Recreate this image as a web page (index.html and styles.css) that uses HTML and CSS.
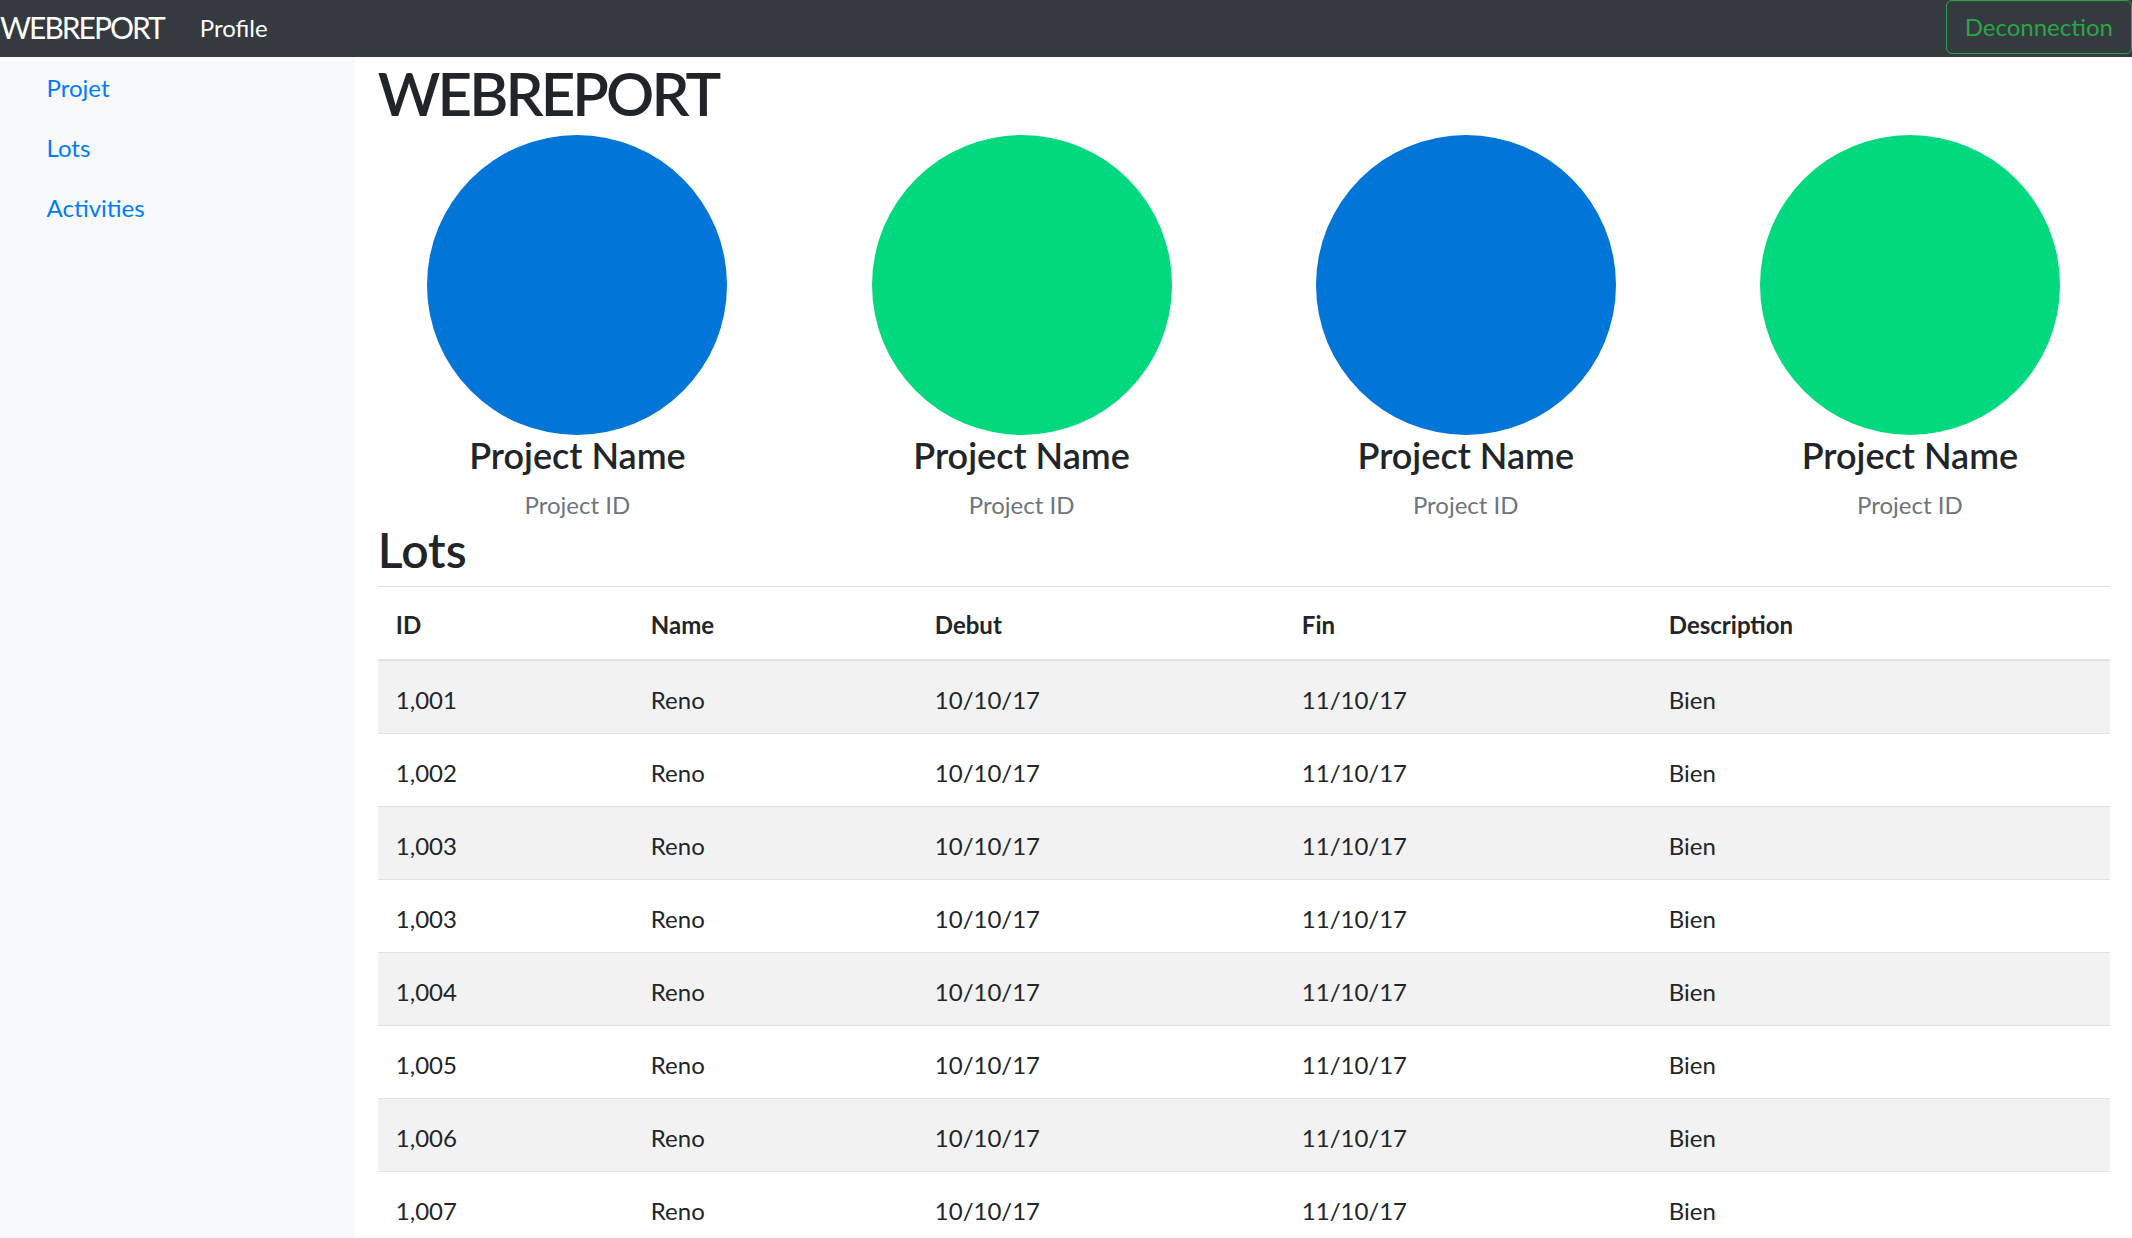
FILE: index.html
```html
<!DOCTYPE html>
<html lang="fr">
<head>
<meta charset="utf-8">
<title>WEBREPORT</title>
<link rel="stylesheet" href="styles.css">
</head>
<body>
<nav class="topbar">
  <a class="brand" href="#">WEBREPORT</a>
  <a class="top-link" href="#">Profile</a>
  <button class="btn-logout" type="button">Deconnection</button>
</nav>
<div class="layout">
  <aside class="sidebar">
    <ul class="side-nav">
      <li><a href="#">Projet</a></li>
      <li><a href="#">Lots</a></li>
      <li><a href="#">Activities</a></li>
    </ul>
  </aside>
  <main class="content">
    <h1 class="page-title">WEBREPORT</h1>
    <section class="projects">
      <div class="project">
        <div class="avatar avatar-blue"></div>
        <h4 class="project-name">Project Name</h4>
        <p class="project-id">Project ID</p>
      </div>
      <div class="project">
        <div class="avatar avatar-green"></div>
        <h4 class="project-name">Project Name</h4>
        <p class="project-id">Project ID</p>
      </div>
      <div class="project">
        <div class="avatar avatar-blue"></div>
        <h4 class="project-name">Project Name</h4>
        <p class="project-id">Project ID</p>
      </div>
      <div class="project">
        <div class="avatar avatar-green"></div>
        <h4 class="project-name">Project Name</h4>
        <p class="project-id">Project ID</p>
      </div>
    </section>
    <h2 class="section-title">Lots</h2>
    <table class="lots">
      <colgroup>
        <col class="c-id"><col class="c-name"><col class="c-debut"><col class="c-fin"><col class="c-desc">
      </colgroup>
      <thead>
        <tr><th>ID</th><th>Name</th><th>Debut</th><th>Fin</th><th>Description</th></tr>
      </thead>
      <tbody>
        <tr><td>1,001</td><td>Reno</td><td>10/10/17</td><td>11/10/17</td><td>Bien</td></tr>
        <tr><td>1,002</td><td>Reno</td><td>10/10/17</td><td>11/10/17</td><td>Bien</td></tr>
        <tr><td>1,003</td><td>Reno</td><td>10/10/17</td><td>11/10/17</td><td>Bien</td></tr>
        <tr><td>1,003</td><td>Reno</td><td>10/10/17</td><td>11/10/17</td><td>Bien</td></tr>
        <tr><td>1,004</td><td>Reno</td><td>10/10/17</td><td>11/10/17</td><td>Bien</td></tr>
        <tr><td>1,005</td><td>Reno</td><td>10/10/17</td><td>11/10/17</td><td>Bien</td></tr>
        <tr><td>1,006</td><td>Reno</td><td>10/10/17</td><td>11/10/17</td><td>Bien</td></tr>
        <tr><td>1,007</td><td>Reno</td><td>10/10/17</td><td>11/10/17</td><td>Bien</td></tr>
      </tbody>
    </table>
  </main>
</div>
</body>
</html>
```
FILE: styles.css
```css
html, body {
  margin: 0;
  height: 100%;
  overflow: hidden;
}
body {
  font-family: Lato, "Noto Sans", sans-serif;
  font-size: 24px;
  line-height: 36px;
  color: #212529;
  background: #fff;
}
.topbar {
  height: 57px;
  background: #343a40;
  display: flex;
  align-items: flex-start;
}
.brand {
  font-size: 30px;
  line-height: 55px;
  letter-spacing: -2px;
  color: #fff;
  text-decoration: none;
  margin-right: 24px;
}
.top-link {
  font-size: 24px;
  line-height: 55px;
  color: #fff;
  text-decoration: none;
  padding: 0 12px;
}
.btn-logout {
  margin-left: auto;
  font-family: inherit;
  font-size: 24px;
  line-height: 36px;
  height: 54px;
  padding: 8px 18px;
  border: 1px solid #28a745;
  border-radius: 6px;
  color: #28a745;
  background: transparent;
}
.layout {
  display: flex;
  height: calc(100% - 57px);
}
.sidebar {
  flex: none;
  width: 16.6667%;
  background: #f8f9fa;
  padding-top: 1px;
}
.side-nav {
  list-style: none;
  margin: 0;
  padding: 0 0 0 22.5px;
}
.side-nav a {
  display: block;
  padding: 12px 24px;
  color: #007bff;
  text-decoration: none;
}
.content {
  flex: 1;
  min-width: 0;
  padding: 0 22.5px;
}
.page-title {
  margin: 0;
  font-size: 60px;
  line-height: 72px;
  font-weight: 600;
  letter-spacing: -2.9px;
}
.projects {
  display: grid;
  grid-template-columns: repeat(4, 1fr);
  margin: 6px -22.5px 0;
  text-align: center;
}
.avatar {
  width: 300px;
  height: 300px;
  border-radius: 50%;
  margin: 0 auto;
}
.avatar-blue { background: #0275d8; }
.avatar-green { background: #02d97f; }
.project-name {
  margin: 2px 0 0;
  font-size: 36px;
  line-height: 36px;
  font-weight: 600;
}
.project-id {
  margin: 14px 0 0;
  color: #6c757d;
}
.section-title {
  margin: 0 0 9px;
  font-size: 48px;
  line-height: 54px;
  font-weight: 600;
}
.lots {
  width: 100%;
  border-collapse: collapse;
  table-layout: fixed;
}
.c-id { width: 255px; }
.c-name { width: 284px; }
.c-debut { width: 367px; }
.c-fin { width: 367px; }
.lots th, .lots td {
  padding: 21px 18px 15px;
  text-align: left;
  vertical-align: top;
  border-top: 1px solid #dee2e6;
}
.lots th {
  font-weight: 700;
  padding-top: 20px;
  padding-bottom: 16px;
  border-bottom: 2px solid #dee2e6;
}
.lots tbody tr:nth-child(odd) {
  background: rgba(0, 0, 0, 0.05);
}
```
